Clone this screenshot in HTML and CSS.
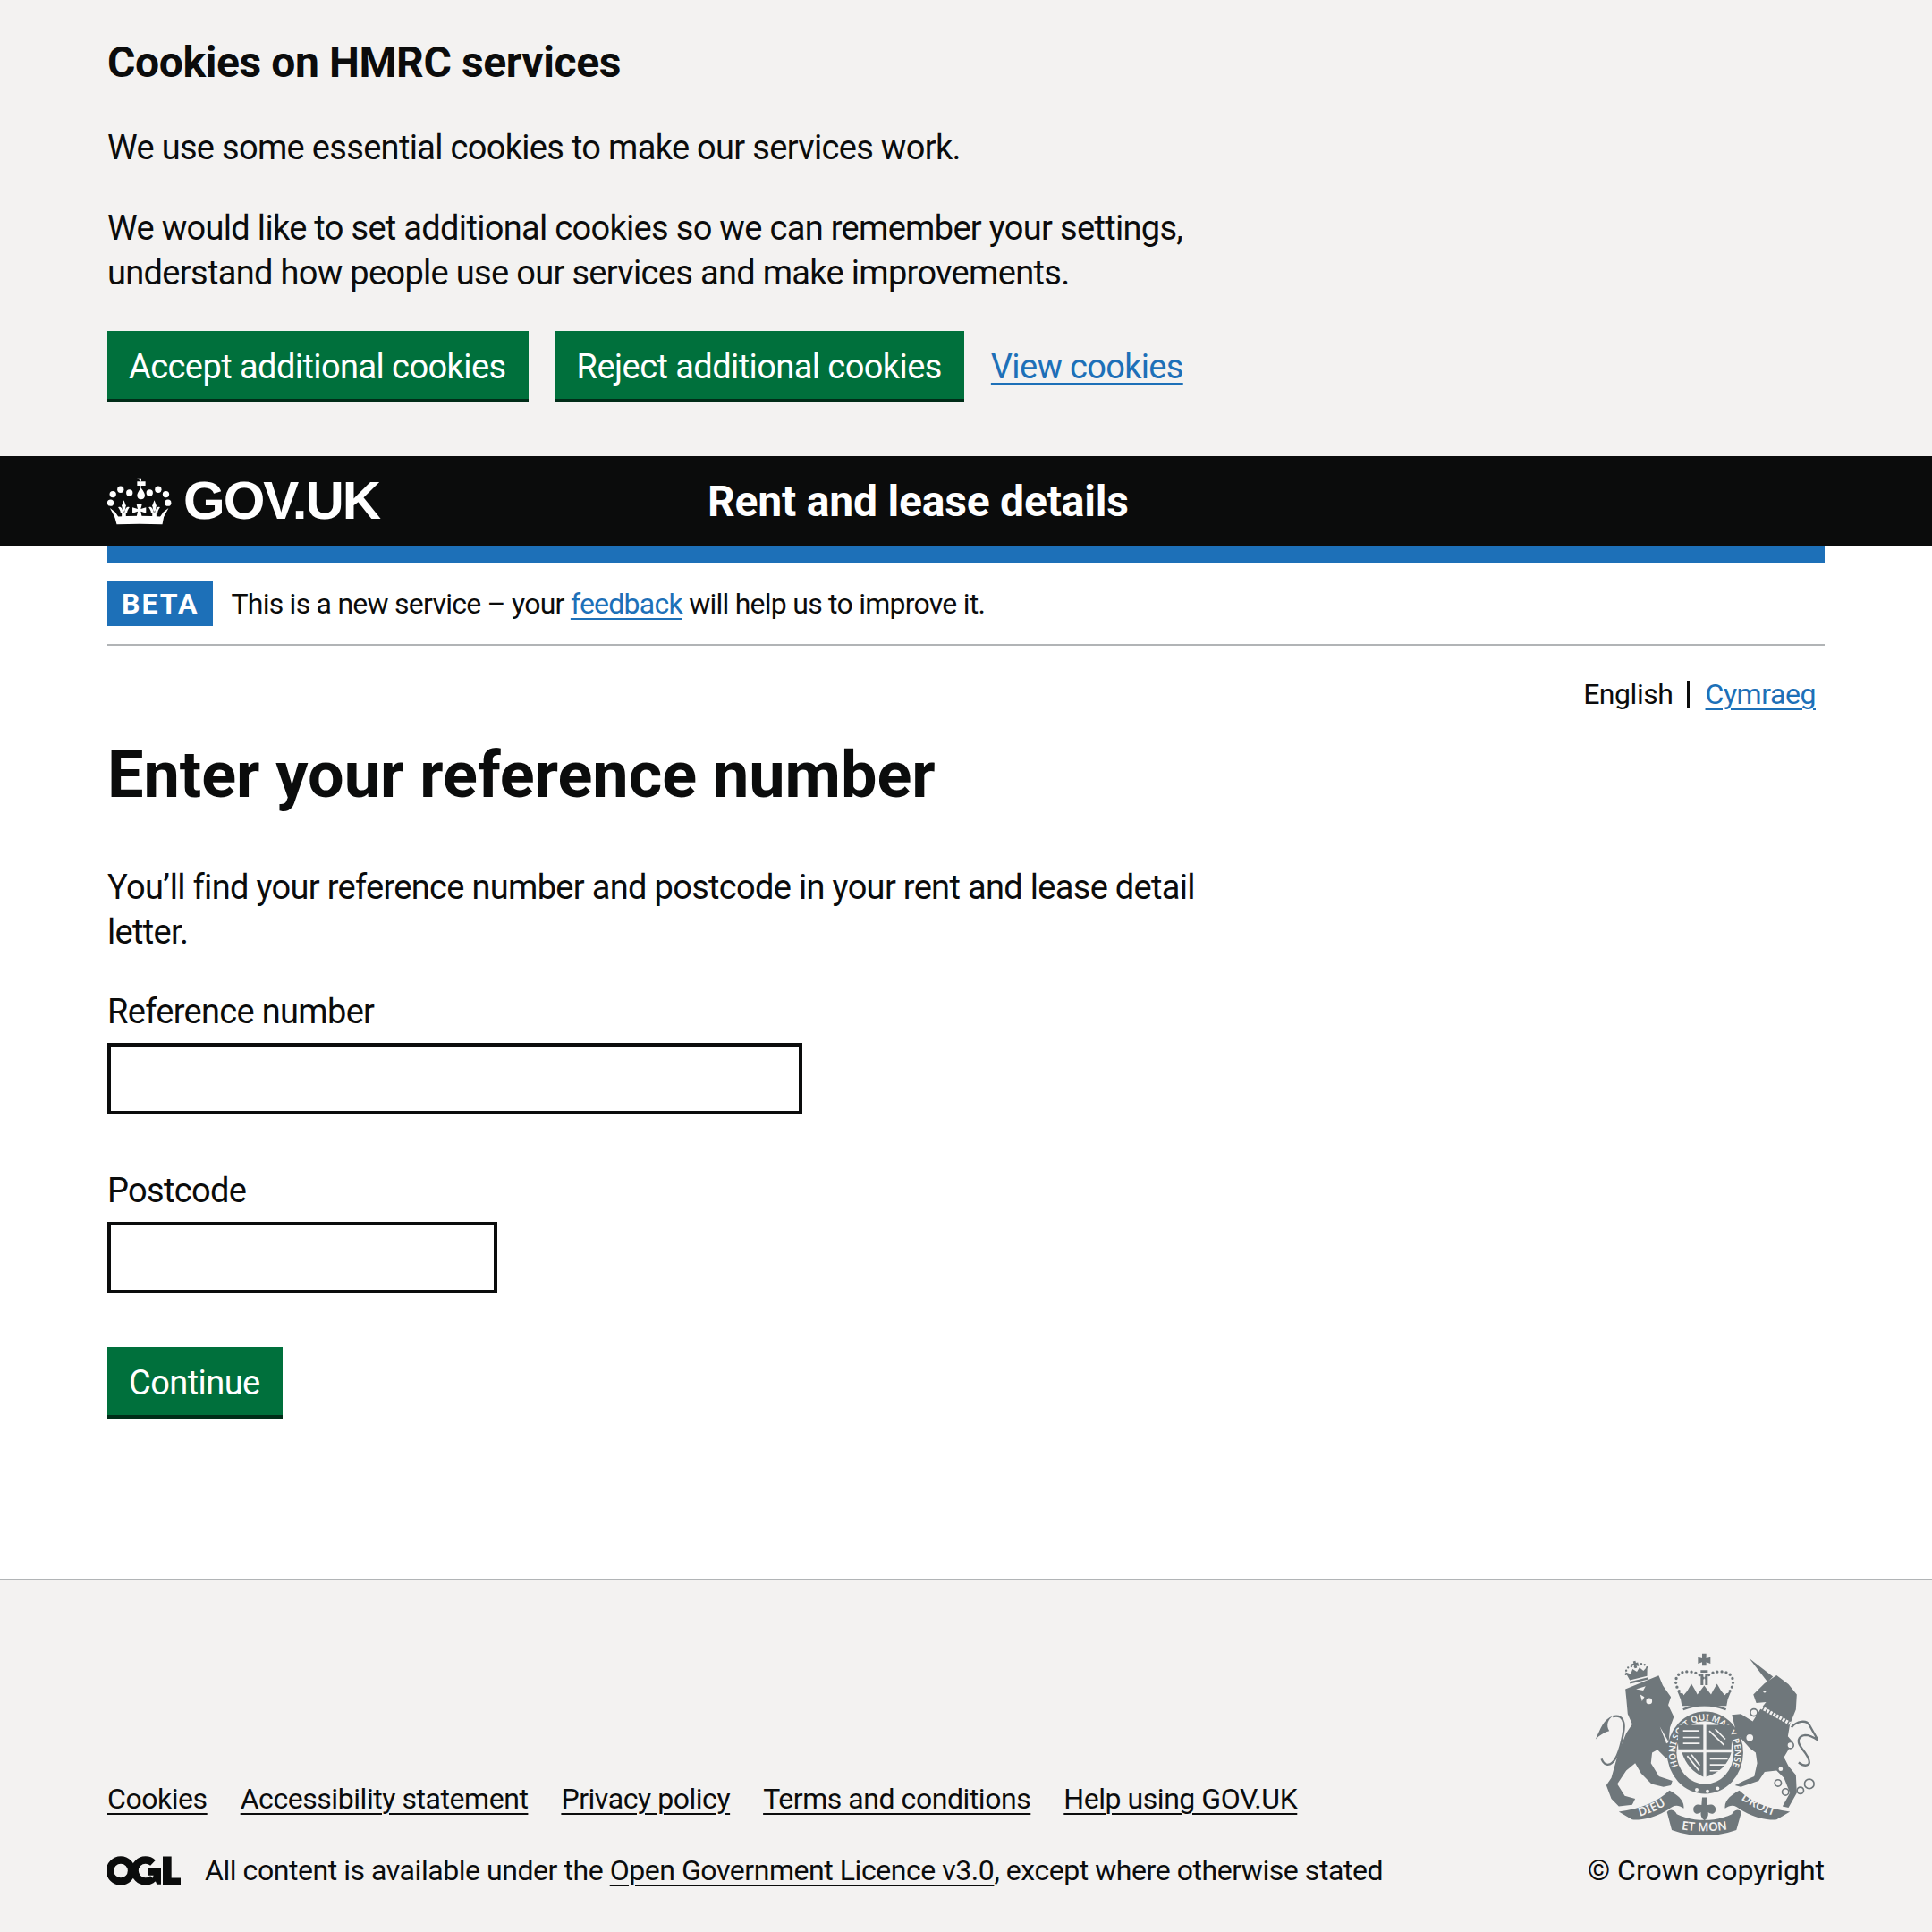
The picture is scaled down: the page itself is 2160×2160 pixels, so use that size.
FILE: index.html
```html
<!DOCTYPE html>
<html lang="en">
<head>
    <meta charset="UTF-8">
    <meta name="viewport" content="width=device-width, initial-scale=1.0">
    <title>Enter your reference number</title>
    <link rel="stylesheet" href="styles.css">
</head>
<body>

    <!-- Cookie banner -->
    <div class="cookie-banner">
        <div class="container">
            <h2 class="cookie-title">Cookies on HMRC services</h2>
            <p class="body-text cookie-text">We use some essential cookies to make our services work.</p>
            <p class="body-text cookie-text">We would like to set additional cookies so we can remember your settings, understand how people use our services and make improvements.</p>
            <div class="button-row">
                <button type="button" class="btn">Accept additional cookies</button>
                <button type="button" class="btn">Reject additional cookies</button>
                <a href="#" class="link body-text">View cookies</a>
            </div>
        </div>
    </div>

    <!-- Header -->
    <header class="site-header">
        <div class="container header-inner">
            <a href="#" class="logo">
                <svg class="crown" viewBox="60 92 216 160" aria-hidden="true">
                    <defs>
                        <g id="fleur">
                            <path d="M115 168L122 186 118 206H112L108 186z"/>
                            <path d="M96 192C104 188 112 196 112 212H104C104 203 100 198 96 192z"/>
                            <path d="M134 192C126 188 118 196 118 212H126C126 203 130 198 134 192z"/>
                            <rect x="108" y="208" width="14" height="18"/>
                        </g>
                    </defs>
                    <g fill="#fff">
                        <circle cx="78" cy="148" r="11"/>
                        <circle cx="104" cy="132" r="11"/>
                        <circle cx="134" cy="143" r="11"/>
                        <circle cx="202" cy="143" r="11"/>
                        <circle cx="231" cy="132" r="11"/>
                        <circle cx="257" cy="148" r="11"/>
                        <circle cx="70" cy="177" r="11"/>
                        <circle cx="264" cy="177" r="11"/>
                        <path d="M160 94h14v11h14v14h-14v9c8 10 12 18 12 24 0 8-6 13-13 13s-13-5-13-13c0-6 4-14 12-24v-9h-12v-14h14z"/>
                        <use href="#fleur"/>
                        <use href="#fleur" x="103"/>
                        <path d="M167 180L176 183 172 198 190 192V212L172 206 176 224H158L162 206 144 212V192L162 198 158 183z"/>
                        <path d="M68 195L86 208 98 226H85zM266 195L248 208 236 226H249z"/>
                        <path d="M84 224Q167 218 250 224L245 250Q167 246 91 250z"/>
                    </g>
                </svg>
                <span class="logo-text">GOV.UK</span>
            </a>
            <a href="#" class="service-name">Rent and lease details</a>
        </div>
    </header>

    <div class="container">
        <div class="blue-bar"></div>

        <div class="phase-banner">
            <strong class="phase-tag">BETA</strong>
            <span class="small-text phase-text">This is a new service – your <a href="#" class="link">feedback</a> will help us to improve it.</span>
        </div>

        <nav class="lang-toggle small-text">
            <span class="lang-current">English</span>
            <a href="#" class="link">Cymraeg</a>
        </nav>

        <main class="main-content">
            <h1 class="page-title">Enter your reference number</h1>
            <p class="body-text intro">You’ll find your reference number and postcode in your rent and lease detail letter.</p>

            <form>
                <div class="form-group">
                    <label class="body-text form-label" for="ref">Reference number</label>
                    <input class="form-input" id="ref" type="text">
                </div>
                <div class="form-group">
                    <label class="body-text form-label" for="postcode">Postcode</label>
                    <input class="form-input form-input-short" id="postcode" type="text">
                </div>
                <button type="submit" class="btn">Continue</button>
            </form>
        </main>
    </div>

    <!-- Footer -->
    <footer class="site-footer">
        <div class="container footer-inner">
            <div class="footer-meta">
                <ul class="footer-links small-text">
                    <li><a href="#" class="footer-link">Cookies</a></li>
                    <li><a href="#" class="footer-link">Accessibility statement</a></li>
                    <li><a href="#" class="footer-link">Privacy policy</a></li>
                    <li><a href="#" class="footer-link">Terms and conditions</a></li>
                    <li><a href="#" class="footer-link">Help using GOV.UK</a></li>
                </ul>
                <div class="licence small-text">
                    <svg class="ogl" viewBox="60 62 246 104" aria-hidden="true">
                        <g fill="none" stroke="#0b0c0c" stroke-width="25">
                            <circle cx="105" cy="114" r="36"/>
                            <path d="M213 88A36 36 0 1 0 213 140"/>
                        </g>
                        <path fill="#0b0c0c" d="M195 106H240V160H226L222 150 208 146 215 130H195zM246 66h29v72h31v25h-60z"/>
                    </svg>
                    <span>All content is available under the <a href="#" class="footer-link">Open Government Licence v3.0</a>, except where otherwise stated</span>
                </div>
            </div>
            <div class="footer-crest">
                <svg class="crest" viewBox="70 50 750 610" aria-hidden="true">
                    <defs>
                        <path id="garterPath" d="M371 463A100 108 0 1 1 509 463"/>
                        <path id="dieuPath" d="M205 603Q265 590 322 552"/>
                        <path id="monPath" d="M345 640Q437 658 530 640"/>
                        <path id="droitPath" d="M552 535Q610 578 680 600"/>
                    </defs>

                    <!-- lion -->
                    <g class="crest-fill">
                        <path d="M172 172L284 126 298 160 325 198 316 225 335 265 322 300 318 345 340 390 325 412 305 400 280 375 262 385 258 420 285 465 330 480 325 495 300 500 260 490 225 455 205 420 175 445 145 490 170 530 205 540 195 560 150 565 125 540 108 495 125 470 150 380 175 320 195 290 180 255 175 200Z"/>
                        <path d="M130 262c-30 8-42 45-58 78 14-14 30-24 46-28-12-18-4-40 12-50z"/>
                    </g>
                    <path class="crest-line" d="M130 264c32-8 44 16 34 62-7 36-20 88-44 98-14 4-24-6-28-18"/>
                    <g class="crest-cut">
                        <path d="M208 172l32-10-8 14z"/>
                        <circle cx="252" cy="212" r="10"/>
                        <path d="M222 190l14 8-8 14z"/>
                        <path d="M288 298l30 52-8 4z"/>
                    </g>

                    <!-- lion's crown -->
                    <g transform="rotate(-14 212 118)">
                        <path class="crest-fill" d="M182 135h60l8-30-16 10-10-14-12 12-12-12-10 14-16-10z"/>
                        <path class="crest-line crest-dots" d="M174 112C180 86 196 88 212 96 228 88 244 86 250 112"/>
                        <path class="crest-fill" d="M208 76h8v7h7v7h-7v10h-8V90h-7v-7h7z"/>
                        <rect class="crest-fill" x="180" y="140" width="64" height="7"/>
                    </g>

                    <!-- central crown -->
                    <g class="crest-fill">
                        <path d="M430 52h14v16l14-4v22l-14-5v12h-14V81l-14 5V64l14 4z"/>
                        <path d="M425 108h24v8h-24zM425 122h9v36h-9zM440 122h9v36h-9z"/>
                        <path d="M358 206l-12-30 22 16 12-14 14-24 14 24 6 12 14-18 9-12 9 12 14 18 6-12 14-24 14 24 12 14 22-16-12 30-4 22H362z"/>
                    </g>
                    <path class="crest-line crest-dots crest-dots-big" d="M362 190C326 150 340 110 385 113 410 113 425 125 433 135"/>
                    <path class="crest-line crest-dots crest-dots-big" d="M514 190C550 150 534 110 489 113 464 113 449 125 441 135"/>
                    <path class="crest-line" d="M366 240Q437 210 510 240"/>

                    <!-- unicorn -->
                    <g class="crest-fill">
                        <path d="M588 68L668 130 650 148z"/>
                        <path d="M602 190L640 152 680 125 720 155 748 190 745 240 725 290 718 330 735 350 705 400 720 430 745 460 748 520 720 570 700 565 725 520 705 470 680 445 640 450 620 480 560 500 540 495 570 480 605 465 615 420 610 385 590 370 545 320 530 258 560 255 600 280 625 240 645 215 612 218z"/>
                    </g>
                    <path class="crest-collar" d="M627 232l98 55"/>
                    <path class="crest-line" d="M730 300c18-22 50-26 60-8 10 18 20 36 30 52-14-10-28-18-44-18-24 4-30 22-10 46 16 20 30 40 22 52-10 8-26 0-34-6" />
                    <g class="crest-ring">
                        <circle cx="604" cy="250" r="12"/>
                        <circle cx="590" cy="335" r="14"/>
                        <circle cx="726" cy="360" r="11"/>
                        <circle cx="685" cy="487" r="11"/>
                        <circle cx="710" cy="517" r="11"/>
                        <circle cx="760" cy="512" r="11"/>
                        <circle cx="790" cy="490" r="16"/>
                    </g>
                    <g class="crest-cut">
                        <circle cx="716" cy="405" r="7"/>
                        <circle cx="694" cy="440" r="7"/>
                        <circle cx="640" cy="180" r="4"/>
                    </g>

                    <!-- garter and shield -->
                    <ellipse class="crest-fill" cx="440" cy="385" rx="128" ry="138"/>
                    <ellipse class="crest-cut" cx="440" cy="385" rx="96" ry="106"/>
                    <text class="crest-text crest-text-garter"><textPath href="#garterPath" startOffset="50%" text-anchor="middle">HONI SOIT QUI MAL Y PENSE</textPath></text>
                    <g class="crest-fill">
                        <path d="M354 292h80v82h-84c-2-30-2-56 4-82zM444 292h80c6 26 6 52 4 82h-84zM362 384h72v82c-34-14-60-44-72-82zM444 384h84c-10 40-42 70-84 82z"/>
                    </g>
                    <g class="crest-stripes">
                        <path d="M366 312h54M366 334h56M366 354h56M454 312l50 48M474 306l34 34M456 406h60M456 426h56M456 446h42M380 396l40 50M394 392l28 36"/>
                    </g>
                    <g class="crest-cut">
                        <circle cx="412" cy="510" r="6"/>
                        <circle cx="448" cy="515" r="6"/>
                        <circle cx="482" cy="505" r="6"/>
                    </g>

                    <!-- motto -->
                    <g class="crest-fill">
                        <path d="M150 583Q260 570 320 512C345 525 372 545 368 572 345 555 330 565 318 575 260 610 215 612 195 610z"/>
                        <path d="M312 585C325 570 340 580 345 592 400 618 475 618 530 592 535 580 550 570 562 585L545 645C475 670 395 670 328 645z"/>
                        <path d="M725 583Q615 570 555 512C530 525 503 545 507 572 530 555 545 565 557 575 615 610 660 612 680 610z"/>
                        <path d="M430 535h18v26c18-6 32 4 26 22-6 10-16 8-24 2 2 10-2 22-12 28-10-6-14-18-12-28-8 6-18 8-24-2-6-18 8-28 26-22z"/>
                    </g>
                    <text class="crest-text"><textPath href="#dieuPath" startOffset="50%" text-anchor="middle">DIEU</textPath></text>
                    <text class="crest-text"><textPath href="#monPath" startOffset="50%" text-anchor="middle">ET MON</textPath></text>
                    <text class="crest-text"><textPath href="#droitPath" startOffset="50%" text-anchor="middle">DROIT</textPath></text>
                </svg>
                <div class="small-text copyright"><a href="#" class="footer-link no-underline">© Crown copyright</a></div>
            </div>
        </div>
    </footer>

</body>
</html>
```

FILE: styles.css
```css
* {
    box-sizing: border-box;
}

html,
body {
    margin: 0;
    padding: 0;
}

body {
    font-family: Roboto, Arial, sans-serif;
    color: #0b0c0c;
    background-color: #fff;
}

.container {
    margin: 0 120px;
}

.body-text {
    font-size: 38px;
    line-height: 50px;
    letter-spacing: -0.018em;
}

.small-text {
    font-size: 32px;
    line-height: 50px;
    letter-spacing: -0.014em;
}

.link {
    color: #1d70b8;
    text-decoration: underline;
    text-decoration-thickness: 2px;
    text-underline-offset: 5px;
}

.btn {
    display: inline-block;
    height: 76px;
    margin: 0 0 4px;
    padding: 3px 25px 0 24px;
    font-family: inherit;
    font-size: 38px;
    letter-spacing: -0.015em;
    color: #fff;
    background-color: #00703c;
    border: none;
    border-radius: 0;
    box-shadow: 0 4px 0 #002d18;
    cursor: pointer;
}

/* cookie banner */
.cookie-banner {
    height: 510px;
    padding-top: 40px;
    background-color: #f3f2f1;
}

.cookie-title {
    margin: 0 0 40px;
    font-size: 48px;
    line-height: 60px;
    font-weight: 700;
    letter-spacing: -0.4px;
}

.cookie-text {
    max-width: 1280px;
    margin: 0 0 40px;
}

.button-row {
    display: flex;
    align-items: center;
    gap: 30px;
}

/* header */
.site-header {
    height: 100px;
    background-color: #0b0c0c;
}

.header-inner {
    display: flex;
    align-items: center;
    height: 100%;
}

.logo {
    display: flex;
    align-items: center;
    gap: 13px;
    width: 671px;
    color: #fff;
    text-decoration: none;
}

.crown {
    display: block;
    width: 72px;
    height: 53px;
}

.logo-text {
    font-family: "Liberation Sans", Arial, sans-serif;
    font-size: 60px;
    font-weight: 700;
    line-height: 60px;
    letter-spacing: -2px;
}

.service-name {
    font-size: 48px;
    font-weight: 700;
    letter-spacing: -0.2px;
    color: #fff;
    text-decoration: none;
}

.blue-bar {
    height: 20px;
    background-color: #1d70b8;
}

/* phase banner */
.phase-banner {
    display: flex;
    align-items: center;
    gap: 20px;
    padding: 20px 0 20px;
    border-bottom: 2px solid #b1b4b6;
}

.phase-tag {
    height: 50px;
    padding: 0 16px;
    font-size: 32px;
    font-weight: 700;
    line-height: 50px;
    letter-spacing: 2px;
    color: #fff;
    background-color: #1d70b8;
}

.phase-text {
    letter-spacing: -0.75px;
}

.lang-toggle {
    display: flex;
    justify-content: flex-end;
    padding: 29px 10px 0 0;
}

.lang-current {
    margin-right: 18px;
    padding-right: 18px;
    background: linear-gradient(#0b0c0c, #0b0c0c) right center / 3px 30px no-repeat;
}

/* main */
.page-title {
    margin: 26px 0 0;
    font-size: 72px;
    line-height: 80px;
    font-weight: 700;
}

.intro {
    max-width: 1280px;
    margin: 60px 0 0;
}

.form-group {
    margin-bottom: 60px;
}

.form-label {
    display: block;
    margin: 0 0 10px;
}

form {
    margin-top: 39px;
}

.form-input {
    display: block;
    width: 777px;
    height: 80px;
    padding: 10px;
    font-family: inherit;
    font-size: 38px;
    background-color: #fff;
    border: 4px solid #0b0c0c;
    border-radius: 0;
}

.form-input-short {
    width: 436px;
}

.main-content {
    height: 938px;
}

/* footer */
.site-footer {
    height: 395px;
    padding-top: 81px;
    background-color: #f3f2f1;
    border-top: 2px solid #b1b4b6;
}

.footer-inner {
    display: flex;
    justify-content: space-between;
    align-items: flex-end;
}

.footer-links {
    display: flex;
    gap: 37px;
    margin: 0 0 30px;
    padding: 0;
    list-style: none;
}

.footer-link {
    color: #0b0c0c;
    text-decoration: underline;
    text-decoration-thickness: 2px;
    text-underline-offset: 5px;
}

.no-underline {
    text-decoration: none;
}

.licence {
    display: flex;
    align-items: center;
    gap: 27px;
}

.ogl {
    display: block;
    width: 82px;
    height: 35px;
}

.footer-crest {
    display: flex;
    flex-direction: column;
    align-items: flex-end;
}

.copyright {
    letter-spacing: 0;
}

.crest {
    display: block;
    width: 250px;
    height: 203px;
    margin: 0 7px 15px 0;
}

/* crest parts */
.crest-fill {
    fill: #6f777b;
}

.crest-cut {
    fill: #f3f2f1;
}

.crest-line {
    fill: none;
    stroke: #6f777b;
    stroke-width: 7;
}

.crest-dots {
    stroke-linecap: round;
    stroke-dasharray: 0 12;
    stroke-width: 7;
}

.crest-dots-big {
    stroke-width: 10;
    stroke-dasharray: 0 15;
}

.crest-collar {
    fill: none;
    stroke: #f3f2f1;
    stroke-width: 12;
    stroke-dasharray: 8 4;
}

.crest-ring {
    fill: #f3f2f1;
    stroke: #6f777b;
    stroke-width: 5;
}

.crest-stripes {
    fill: none;
    stroke: #f3f2f1;
    stroke-width: 5;
}

.crest-text {
    font-family: "Noto Sans", Arial, sans-serif;
    font-size: 40px;
    font-weight: 600;
    letter-spacing: 0;
    fill: #f3f2f1;
}

.crest-text-garter {
    font-size: 30px;
}
```
